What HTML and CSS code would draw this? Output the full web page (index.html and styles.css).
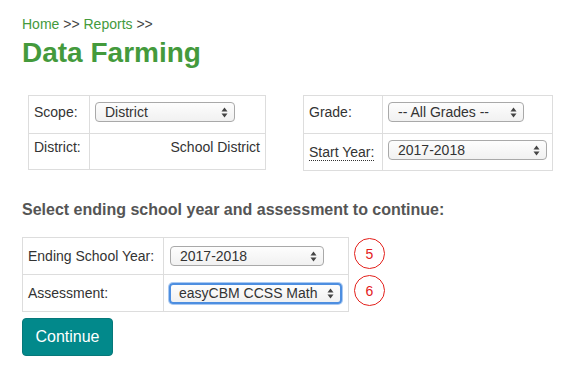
FILE: index.html
```html
<!DOCTYPE html>
<html>
<head>
<meta charset="utf-8">
<link rel="stylesheet" href="styles.css">
</head>
<body>
<div class="page">
  <div class="crumbs"><a class="crumb">Home</a> &gt;&gt; <a class="crumb">Reports</a> &gt;&gt;</div>
  <h1 class="title">Data Farming</h1>

  <div class="filters">
    <table class="grid grid-scope">
      <tr class="r1">
        <td class="lbl">Scope:</td>
        <td class="val"><div class="sel w-scope"><span>District</span><svg class="arr" width="7" height="11" viewBox="0 0 7 11"><path d="M3.5 0.5 L6.5 4.5 L0.5 4.5 Z M3.5 10.5 L6.5 6.5 L0.5 6.5 Z" fill="#444"/></svg></div></td>
      </tr>
      <tr class="r2">
        <td class="lbl">District:</td>
        <td class="val right">School District</td>
      </tr>
    </table>

    <table class="grid grid-grade">
      <tr class="r1">
        <td class="lbl">Grade:</td>
        <td class="val"><div class="sel w-grade"><span>-- All Grades --</span><svg class="arr" width="7" height="11" viewBox="0 0 7 11"><path d="M3.5 0.5 L6.5 4.5 L0.5 4.5 Z M3.5 10.5 L6.5 6.5 L0.5 6.5 Z" fill="#444"/></svg></div></td>
      </tr>
      <tr class="r2b">
        <td class="lbl"><abbr class="dotted">Start Year:</abbr></td>
        <td class="val"><div class="sel w-start"><span>2017-2018</span><svg class="arr" width="7" height="11" viewBox="0 0 7 11"><path d="M3.5 0.5 L6.5 4.5 L0.5 4.5 Z M3.5 10.5 L6.5 6.5 L0.5 6.5 Z" fill="#444"/></svg></div></td>
      </tr>
    </table>
  </div>

  <h2 class="prompt">Select ending school year and assessment to continue:</h2>

  <div class="endrow">
    <table class="grid grid-end">
      <tr class="r3">
        <td class="lbl">Ending School Year:</td>
        <td class="val"><div class="sel w-end"><span>2017-2018</span><svg class="arr" width="7" height="11" viewBox="0 0 7 11"><path d="M3.5 0.5 L6.5 4.5 L0.5 4.5 Z M3.5 10.5 L6.5 6.5 L0.5 6.5 Z" fill="#444"/></svg></div></td>
      </tr>
      <tr class="r3">
        <td class="lbl">Assessment:</td>
        <td class="val"><div class="sel w-assess focus"><span>easyCBM CCSS Math</span><svg class="arr" width="7" height="11" viewBox="0 0 7 11"><path d="M3.5 0.5 L6.5 4.5 L0.5 4.5 Z M3.5 10.5 L6.5 6.5 L0.5 6.5 Z" fill="#444"/></svg></div></td>
      </tr>
    </table>
    <div class="marks">
      <div class="mark">5</div>
      <div class="mark">6</div>
    </div>
  </div>

  <button class="btn">Continue</button>
</div>
</body>
</html>
```

FILE: styles.css
```css
* { box-sizing: border-box; }
html, body { margin: 0; padding: 0; background: #fff; }
body {
  font-family: "Liberation Sans", Arial, Helvetica, sans-serif;
  color: #333;
  font-size: 14px;
}
.page { padding: 14px 22px 0 22px; }
.crumbs { font-size: 14px; line-height: 20px; color: #444; }
.crumb { color: #449a3c; text-decoration: none; }
.title {
  margin: 3px 0 0 0;
  font-size: 28px;
  line-height: 32px;
  font-weight: bold;
  color: #449a3c;
}
.filters {
  display: flex;
  align-items: flex-start;
  margin-top: 26px;
  padding-left: 6px;
  gap: 37px;
}
.grid {
  border-collapse: collapse;
  font-size: 14px;
  line-height: 20px;
  color: #333;
}
.grid td {
  border: 1px solid #ddd;
  padding: 0 5px;
}
.grid-scope { width: 238px; }
.grid-scope .lbl { width: 61px; }
.grid-grade { width: 250px; }
.grid-grade .lbl { width: 79px; }
.grid-end { width: 327px; }
.grid-end .lbl { width: 141px; }

.r1 td { height: 38px; vertical-align: top; padding-top: 6px; }
.r2 td { height: 36px; vertical-align: top; padding-top: 3px; }
.r2b td { height: 37px; vertical-align: top; padding-top: 6px; }
.r2b .lbl { padding-top: 8px; }
.r3 td { height: 37px; vertical-align: middle; }
.right { text-align: right; }
.dotted { text-decoration: none; border-bottom: 1px dotted #333; }

.sel {
  display: flex;
  align-items: center;
  justify-content: space-between;
  height: 20px;
  padding: 0 6px 0 9px;
  border: 1px solid #a9a9a9;
  border-radius: 4px;
  background: linear-gradient(#fdfdfd, #f1f1f1);
  font-size: 14px;
  line-height: 18px;
  color: #333;
}
.arr { flex: none; }
.w-scope { width: 140px; }
.w-grade { width: 136px; }
.w-start { width: 159px; }
.w-end { width: 154px; margin-left: 1px; }
.w-assess { width: 173px; }
.focus {
  border: 2px solid #4d8ee0;
  box-shadow: 0 0 0 1px #a9c9f2;
  height: 21px;
  padding-left: 8px;
}

.prompt {
  margin: 29px 0 0 0;
  font-size: 16px;
  line-height: 20px;
  font-weight: bold;
  color: #555;
}
.endrow {
  display: flex;
  align-items: flex-start;
  margin-top: 17px;
  gap: 5px;
}
.marks {
  display: flex;
  flex-direction: column;
  gap: 6px;
  padding-top: 1px;
}
.mark {
  width: 31px;
  height: 31px;
  border: 1.6px solid #e3201b;
  border-radius: 50%;
  color: #e3201b;
  font-size: 14px;
  display: flex;
  align-items: center;
  justify-content: center;
}
.btn {
  display: block;
  margin-top: 6px;
  width: 91px;
  height: 38px;
  border: 1px solid #06787a;
  border-radius: 4px;
  background: #02898b;
  color: #fff;
  font-family: "Liberation Sans", Arial, Helvetica, sans-serif;
  font-size: 16px;
  padding: 0;
}
```
